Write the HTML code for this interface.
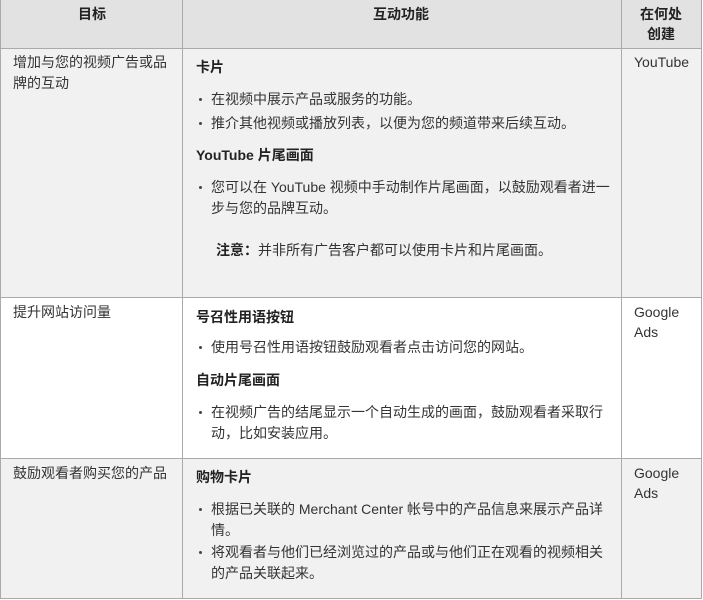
<!DOCTYPE html>
<html><head><meta charset="utf-8"><style>
*{margin:0;padding:0;box-sizing:border-box}
body{width:703px;height:600px;background:#fff;font-family:"Liberation Sans","Noto Sans CJK SC",sans-serif;font-size:14px;color:#333;position:relative;overflow:hidden}
.bg{position:absolute;left:0;width:702px}
.h{position:absolute;background:#aaa;height:1px}
.v{position:absolute;background:#aaa;width:1px}
.t{position:absolute;line-height:18px;white-space:nowrap}
.b{font-weight:bold;color:#222}
.d{position:absolute;width:3px;height:3px;border-radius:50%;background:#444}
</style></head><body>
<div class="bg" style="top:0;height:48px;background:#e2e2e2"></div>
<div class="bg" style="top:49px;height:248px;background:#f1f1f1"></div>
<div class="bg" style="top:459px;height:139px;background:#f1f1f1"></div>
<div class="h" style="top:48px;left:0;width:702px"></div>
<div class="h" style="top:297px;left:0;width:702px"></div>
<div class="h" style="top:458px;left:0;width:702px"></div>
<div class="h" style="top:598px;left:0;width:702px"></div>
<div class="v" style="left:0;top:0;height:599px"></div>
<div class="v" style="left:182px;top:0;height:599px"></div>
<div class="v" style="left:621px;top:0;height:599px"></div>
<div class="v" style="left:701px;top:0;height:599px"></div>

<div class="t b" style="left:78px;top:5px">目标</div>
<div class="t b" style="left:373px;top:5px">互动功能</div>
<div class="t b" style="left:640px;top:5px">在何处</div>
<div class="t b" style="left:647px;top:25px">创建</div>

<div class="t" style="left:13px;top:53px">增加与您的视频广告或品</div>
<div class="t" style="left:13px;top:74px">牌的互动</div>
<div class="t b" style="left:196px;top:58px">卡片</div>
<div class="d" style="left:199px;top:98px"></div>
<div class="t" style="left:211px;top:90px">在视频中展示产品或服务的功能。</div>
<div class="d" style="left:199px;top:122px"></div>
<div class="t" style="left:211px;top:114px">推介其他视频或播放列表，以便为您的频道带来后续互动。</div>
<div class="t b" style="left:196px;top:146px">YouTube 片尾画面</div>
<div class="d" style="left:199px;top:186px"></div>
<div class="t" style="left:211px;top:178px">您可以在 YouTube 视频中手动制作片尾画面，以鼓励观看者进一</div>
<div class="t" style="left:211px;top:199px">步与您的品牌互动。</div>
<div class="t" style="left:216px;top:241px"><b style="color:#222">注意：</b>并非所有广告客户都可以使用卡片和片尾画面。</div>
<div class="t" style="left:634px;top:53px">YouTube</div>

<div class="t" style="left:13px;top:303px">提升网站访问量</div>
<div class="t b" style="left:196px;top:308px">号召性用语按钮</div>
<div class="d" style="left:199px;top:346px"></div>
<div class="t" style="left:211px;top:338px">使用号召性用语按钮鼓励观看者点击访问您的网站。</div>
<div class="t b" style="left:196px;top:371px">自动片尾画面</div>
<div class="d" style="left:199px;top:411px"></div>
<div class="t" style="left:211px;top:403px">在视频广告的结尾显示一个自动生成的画面，鼓励观看者采取行</div>
<div class="t" style="left:211px;top:424px">动，比如安装应用。</div>
<div class="t" style="left:634px;top:303px">Google</div>
<div class="t" style="left:634px;top:323px">Ads</div>

<div class="t" style="left:13px;top:464px">鼓励观看者购买您的产品</div>
<div class="t b" style="left:196px;top:468px">购物卡片</div>
<div class="d" style="left:199px;top:508px"></div>
<div class="t" style="left:211px;top:500px">根据已关联的 Merchant Center 帐号中的产品信息来展示产品详</div>
<div class="t" style="left:211px;top:521px">情。</div>
<div class="d" style="left:199px;top:551px"></div>
<div class="t" style="left:211px;top:543px">将观看者与他们已经浏览过的产品或与他们正在观看的视频相关</div>
<div class="t" style="left:211px;top:564px">的产品关联起来。</div>
<div class="t" style="left:634px;top:464px">Google</div>
<div class="t" style="left:634px;top:484px">Ads</div>
</body></html>
